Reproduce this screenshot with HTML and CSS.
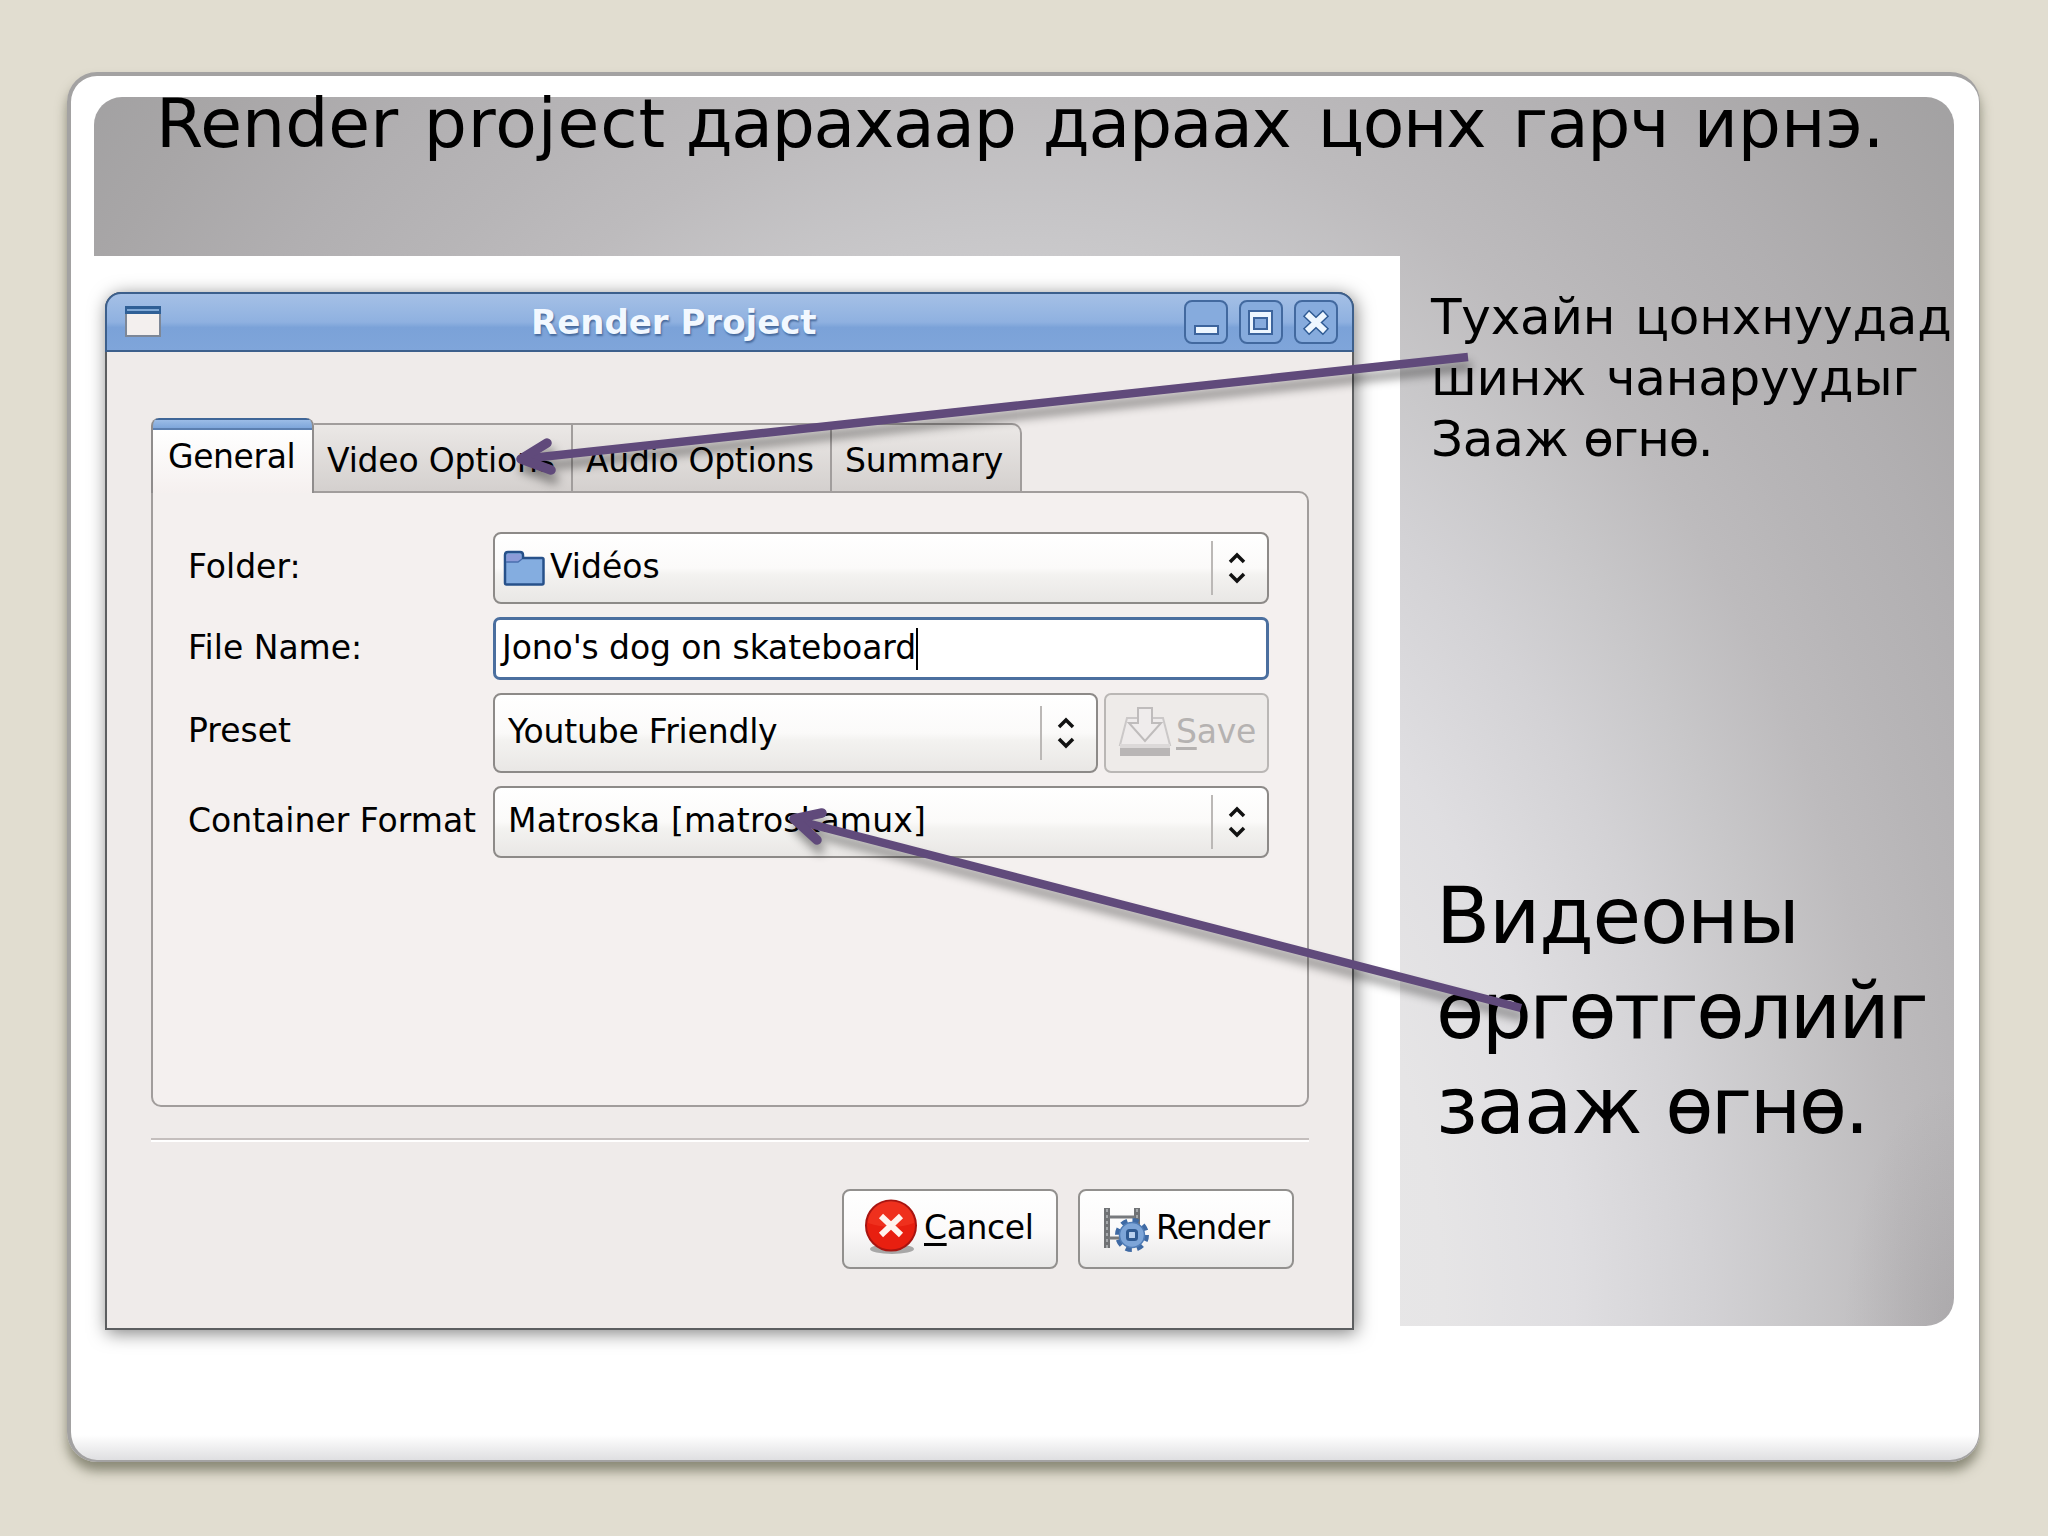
FILE: index.html
```html
<!DOCTYPE html>
<html lang="mn">
<head>
<meta charset="utf-8">
<title>Render project</title>
<link rel="stylesheet" href="styles.css">
</head>
<body>
<main class="card">
  <section class="panel">
    <h1 class="heading">Render <span class="wide">project</span> <span class="tight">дарахаар дараах цонх гарч</span> ирнэ.</h1>
    <div class="content">
      <div class="figure">
        <div class="window">
          <header class="titlebar">
            <svg class="app-icon" viewBox="0 0 36 32"><rect x="1" y="1" width="34" height="29" fill="#f3efee" stroke="#7d8797" stroke-width="2"/><rect x="0" y="0" width="36" height="8" fill="#2f5f96"/><rect x="2" y="3" width="32" height="2" fill="#7fa8d6"/></svg>
            <span class="title">Render Project</span>
            <span class="controls">
              <svg class="control" viewBox="0 0 46 46"><rect class="key" x="2" y="2" width="42" height="42" rx="7"/><rect class="glyph" x="12" y="27" width="23" height="8"/></svg>
              <svg class="control" viewBox="0 0 46 46"><rect class="key" x="2" y="2" width="42" height="42" rx="7"/><path class="glyph" fill-rule="evenodd" d="M11 12h23v23H11zM16 19v11h13V19z"/></svg>
              <svg class="control" viewBox="0 0 46 46"><rect class="key" x="2" y="2" width="42" height="42" rx="7"/><path d="M13 14L33 33M33 14L13 33" stroke="#2f5b94" stroke-width="9"/><path d="M14 15L32 32M32 15L14 32" stroke="#eef7ff" stroke-width="6"/></svg>
            </span>
          </header>
          <div class="window-body">
            <nav class="tabs">
              <span class="tab active">General</span>
              <span class="tab video">Video Options</span>
              <span class="tab audio">Audio Options</span>
              <span class="tab summary">Summary</span>
            </nav>
            <div class="sheet">
              <div class="row folder">
                <label class="label">Folder:</label>
                <div class="combo">
                  <svg class="folder-icon" viewBox="0 0 42 36"><path d="M2 33V5q0-3 3-3h12q3 0 3 3v3h19q1.500 0 1.500 1.500V33q0 1.500-1.500 1.500H3.500Q2 34.500 2 33z" fill="#84ade0" stroke="#27518a" stroke-width="2.500"/><path d="M3.500 11V5.500Q3.500 4 5 4h11q2 0 2 2v3l-4 3H3.500z" fill="#8c9bd8"/><path d="M3 12h12l4-3" fill="none" stroke="#4a6fae" stroke-width="1.500"/></svg>
                  <span class="value">Vidéos</span>
                  <svg class="stepper" viewBox="0 0 20 32"><path d="M3 10l7-7 7 7M3 22l7 7 7-7"/></svg>
                </div>
              </div>
              <div class="row file">
                <label class="label">File Name:</label>
                <div class="entry"><span class="value">Jono's dog on skateboard</span><i class="caret"></i></div>
              </div>
              <div class="row preset">
                <label class="label">Preset</label>
                <div class="combo">
                  <span class="value">Youtube Friendly</span>
                  <svg class="stepper" viewBox="0 0 20 32"><path d="M3 10l7-7 7 7M3 22l7 7 7-7"/></svg>
                </div>
                <div class="save">
                  <svg class="save-icon" viewBox="0 0 54 52"><path d="M9 12h36l7 27H2z" fill="#eeebeb" stroke="#cbc8c8" stroke-width="2"/><rect x="2" y="41" width="50" height="9" fill="#b9b6b6"/><rect x="2" y="38" width="50" height="4" fill="#dcd9d9"/><path d="M20 2h14v15h9L27 35 11 17h9z" fill="#efecec" stroke="#bfbcbc" stroke-width="2"/></svg>
                  <span class="value"><u>S</u>ave</span>
                </div>
              </div>
              <div class="row format">
                <label class="label">Container Format</label>
                <div class="combo">
                  <span class="value">Matroska [matroskamux]</span>
                  <svg class="stepper" viewBox="0 0 20 32"><path d="M3 10l7-7 7 7M3 22l7 7 7-7"/></svg>
                </div>
              </div>
            </div>
            <hr class="rule">
            <footer class="actions">
              <div class="button">
                <svg class="cancel-icon" viewBox="0 0 54 56"><ellipse cx="28" cy="50" rx="22" ry="5" fill="#000" opacity=".3"/><circle cx="27" cy="26.500" r="25" fill="#e81f10" stroke="#a81410" stroke-width="2"/><path d="M4 24a23 22 0 0 1 46 0q-22 8-46 0z" fill="#ff5a3c" opacity=".3"/><path d="M17 17l20 19M37 17l-20 19" stroke="#fff4ee" stroke-width="6"/></svg>
                <span class="value"><u>C</u>ancel</span>
              </div>
              <div class="button render">
                <svg class="render-icon" viewBox="0 0 46 46"><path d="M4 1v40M34 1v22" stroke="#707275" stroke-width="6"/><path d="M4 2v40M34 2v20" stroke="#a5a8ab" stroke-width="2" stroke-dasharray="3 3"/><path d="M6 10h26M6 31h12" stroke="#77797c" stroke-width="3"/><circle cx="29" cy="28" r="14" fill="none" stroke="#3f6aa4" stroke-width="6" stroke-dasharray="6 5"/><circle cx="29" cy="28" r="12.500" fill="#7da5d8" stroke="#4f7cb6" stroke-width="1.500"/><rect x="24.500" y="23.500" width="9" height="9" rx="2" fill="#b9d0ee" stroke="#2f5a92" stroke-width="3"/></svg>
                <span class="value">Render</span>
              </div>
            </footer>
          </div>
        </div>
      </div>
      <aside class="notes">
        <p class="note small">Тухайн цонхнуудад<br>шинж чанаруудыг<br>Зааж <span class="tight">өгнө.</span></p>
        <p class="note large">Видеоны<br><span class="tighter">өргөтгөлийг</span><br>зааж <span class="tighter">өгнө.</span></p>
      </aside>
    </div>
  </section>
</main>
<svg class="arrows" viewBox="0 0 2048 1536">
  <g class="arrow"><path d="M1468 357L522 459"/><path class="head" d="M547 443L521 459L551 470"/></g>
  <g class="arrow"><path d="M1521 1008L795 820"/><path class="head" d="M822 813L794 819L817 840"/></g>
</svg>
</body>
</html>
```
FILE: styles.css
```css
* { box-sizing: border-box; }

body {
  margin: 0;
  width: 2048px;
  height: 1536px;
  padding: 72px 67px;
  overflow: hidden;
  background: #e1ddd0;
  font-family: "DejaVu Sans", Verdana, sans-serif;
  color: #000;
}

.card {
  width: 1913px;
  height: 1390px;
  padding: 21px 23px;
  border: solid #a3a2a2;
  border-width: 4px 1px 2px 4px;
  border-radius: 30px;
  background: linear-gradient(#fff 98.2%, #dfdfe1);
  box-shadow: 0 9px 12px rgba(80, 82, 60, .6);
}

.panel {
  width: 1860px;
  height: 1229px;
  border-radius: 28px;
  background:
    radial-gradient(ellipse 110px 240px at 100% 100%, rgba(90, 86, 90, .14), transparent),
    radial-gradient(ellipse 1000px 1400px at 930px 1229px, #ececec 0%, #e6e5e6 42%, #dfdee1 55%, #d3d2d5 68%, #c8c7c9 78%, #bdbbbd 88%, #b7b5b7 96%, #b1afb1 106%, #a8a6a7 119%, #a1a0a1 130%);
}

.heading {
  height: 159px;
  margin: 0;
  padding-left: 62px;
  font-size: 68px;
  font-weight: 400;
  line-height: 53px;
  white-space: nowrap;
  word-spacing: 4px;
}
.heading .wide { letter-spacing: .9px; }
.heading .tight { margin-left: -6px; letter-spacing: -1.3px; word-spacing: 7px; }

.content {
  display: grid;
  grid-template-columns: 1306px 1fr;
  height: 1070px;
}

.figure {
  height: 1110px;
  padding: 36px 0 0 11px;
  background: #fff;
}

.window {
  width: 1249px;
  height: 1038px;
  border: 2px solid #5c5e60;
  border-radius: 16px 16px 0 0;
  background: #efebea;
  box-shadow: 2px 3px 18px rgba(0, 0, 0, .5);
}

.titlebar {
  display: grid;
  grid-template-columns: 403px 1fr auto;
  align-items: center;
  height: 60px;
  padding: 0 13px 1px 18px;
  margin: -2px -2px 0;
  border: 2px solid #3c5f8c;
  border-radius: 16px 16px 0 0;
  background: linear-gradient(#a5c0e6, #8fb1e0 50%, #7ba2d8 60%, #7fa5da);
}

.app-icon { width: 36px; height: 32px; }

.title {
  padding-left: 3px;
  font-size: 34px;
  font-weight: 700;
  color: #f2f8ff;
  white-space: nowrap;
  text-shadow: 1px 2px 2px #46699c;
}

.controls { display: flex; gap: 9px; }
.control { width: 46px; height: 46px; }
.key { fill: #86abdd; stroke: #42699f; stroke-width: 2; }
.glyph { fill: #eef7ff; stroke: #3d659d; stroke-width: 2; }

.window-body { padding: 66px 43px 0 44px; }

.tabs {
  display: flex;
  align-items: flex-end;
  height: 75px;
  font-size: 33px;
  white-space: nowrap;
}

.tab {
  height: 70px;
  padding-top: 16px;
  border: solid #a19d9c;
  border-width: 2px 2px 2px 0;
  background: linear-gradient(#ebe8e6, #d4d0ce);
  letter-spacing: -.2px;
}
.tab.active {
  z-index: 1;
  width: 163px;
  height: 75px;
  padding: 19px 0 0 15px;
  border: solid #8f8c8c;
  border-width: 0 2px;
  border-radius: 8px 8px 0 0;
  background: linear-gradient(#3f6698 0 2px, #9bbce6 2px, #7ea6da 10px, #5b7fb0 10px 12px, #fff 12px, #f5f0ef);
  letter-spacing: -.4px;
}
.tab.video { width: 259px; padding-left: 13px; }
.tab.audio { width: 259px; padding-left: 13px; letter-spacing: -.3px; }
.tab.summary { width: 190px; padding-left: 13px; border-radius: 0 10px 0 0; }

.sheet {
  width: 1158px;
  height: 616px;
  margin-top: -2px;
  padding: 39px 38px 0 35px;
  border: 2px solid #a19d9c;
  border-radius: 0 10px 10px 10px;
  background: #f4f0ef;
  font-size: 33px;
}

.row { display: flex; white-space: nowrap; }
.label { width: 305px; }
.row.folder, .row.format { height: 72px; line-height: 70px; }
.row.file { height: 63px; margin-top: 13px; line-height: 61px; }
.row.preset { height: 80px; margin: 13px 0; line-height: 76px; }

.combo {
  display: flex;
  flex: 1;
  align-items: center;
  padding: 0 20px 0 13px;
  border: 2px solid #8d8a88;
  border-radius: 8px;
  background: linear-gradient(#fff, #fbfaf9 50%, #f3f2f0 60%, #e9e7e5);
  line-height: 60px;
}
.folder .combo { padding-left: 8px; }
.preset .value { letter-spacing: -.2px; }
.format .combo .value { letter-spacing: .2px; }
.folder-icon { width: 42px; height: 36px; margin-right: 5px; }
.combo .value { flex: 1; padding-bottom: 2px; }

.stepper {
  box-sizing: content-box;
  width: 20px;
  height: 32px;
  padding: 11px 0 11px 14px;
  border-left: 2px solid #bbb8b6;
  fill: none;
  stroke: #111;
  stroke-width: 3.5;
}

.entry {
  display: flex;
  flex: 1;
  align-items: center;
  padding-left: 6px;
  border: 3px solid #4b6f9f;
  border-radius: 7px;
  background: #fff;
  line-height: 54px;
  letter-spacing: -.1px;
}
.entry .value { padding-bottom: 2px; }
.caret { width: 2px; height: 42px; background: #000; }

.save {
  display: flex;
  align-items: center;
  width: 165px;
  margin-left: 6px;
  padding: 0 0 3px 12px;
  border: 2px solid #bab7b5;
  border-radius: 7px;
  background: #eeebe9;
  color: #b5b2b1;
}
.save-icon { width: 54px; height: 52px; margin-right: 4px; }

u { text-decoration-thickness: 3px; text-underline-offset: 4px; }

.rule {
  height: 4px;
  margin: 31px 0 0;
  border: solid;
  border-width: 2px 0;
  border-color: #c4bebd #fff #fff;
}

.actions {
  display: flex;
  justify-content: flex-end;
  gap: 20px;
  padding: 47px 15px 0 0;
  font-size: 33px;
}
.button {
  display: flex;
  align-items: center;
  width: 216px;
  height: 80px;
  padding: 0 0 4px 20px;
  border: 2px solid #92908e;
  border-radius: 8px;
  background: linear-gradient(#fff, #fbfafa 50%, #e9e8e7);
  letter-spacing: -.4px;
}
.button.render { letter-spacing: -.7px; }
.cancel-icon { width: 54px; height: 56px; margin-right: 6px; }
.render-icon { width: 46px; height: 46px; margin: 6px 7px 0 3px; }

.notes { padding: 31px 0 0 31px; }
.note { margin: 0; white-space: nowrap; }
.note.small { font-size: 50px; line-height: 61px; letter-spacing: -.2px; word-spacing: 4px; }
.note.small .tight { margin-left: -5px; letter-spacing: -1.4px; }
.note.large { margin-top: 399px; padding-left: 5px; font-size: 79px; line-height: 95px; letter-spacing: -1.2px; }
.note.large .tighter { letter-spacing: -2.6px; }

.arrows {
  position: absolute;
  top: 0;
  left: 0;
  width: 2048px;
  height: 1536px;
}
.arrow {
  fill: none;
  stroke: #604a7b;
  stroke-width: 8.5;
  filter: drop-shadow(3px 9px 5px rgba(0, 0, 0, .4));
}
.head { stroke-width: 9.5; stroke-linecap: round; stroke-linejoin: round; }
```
